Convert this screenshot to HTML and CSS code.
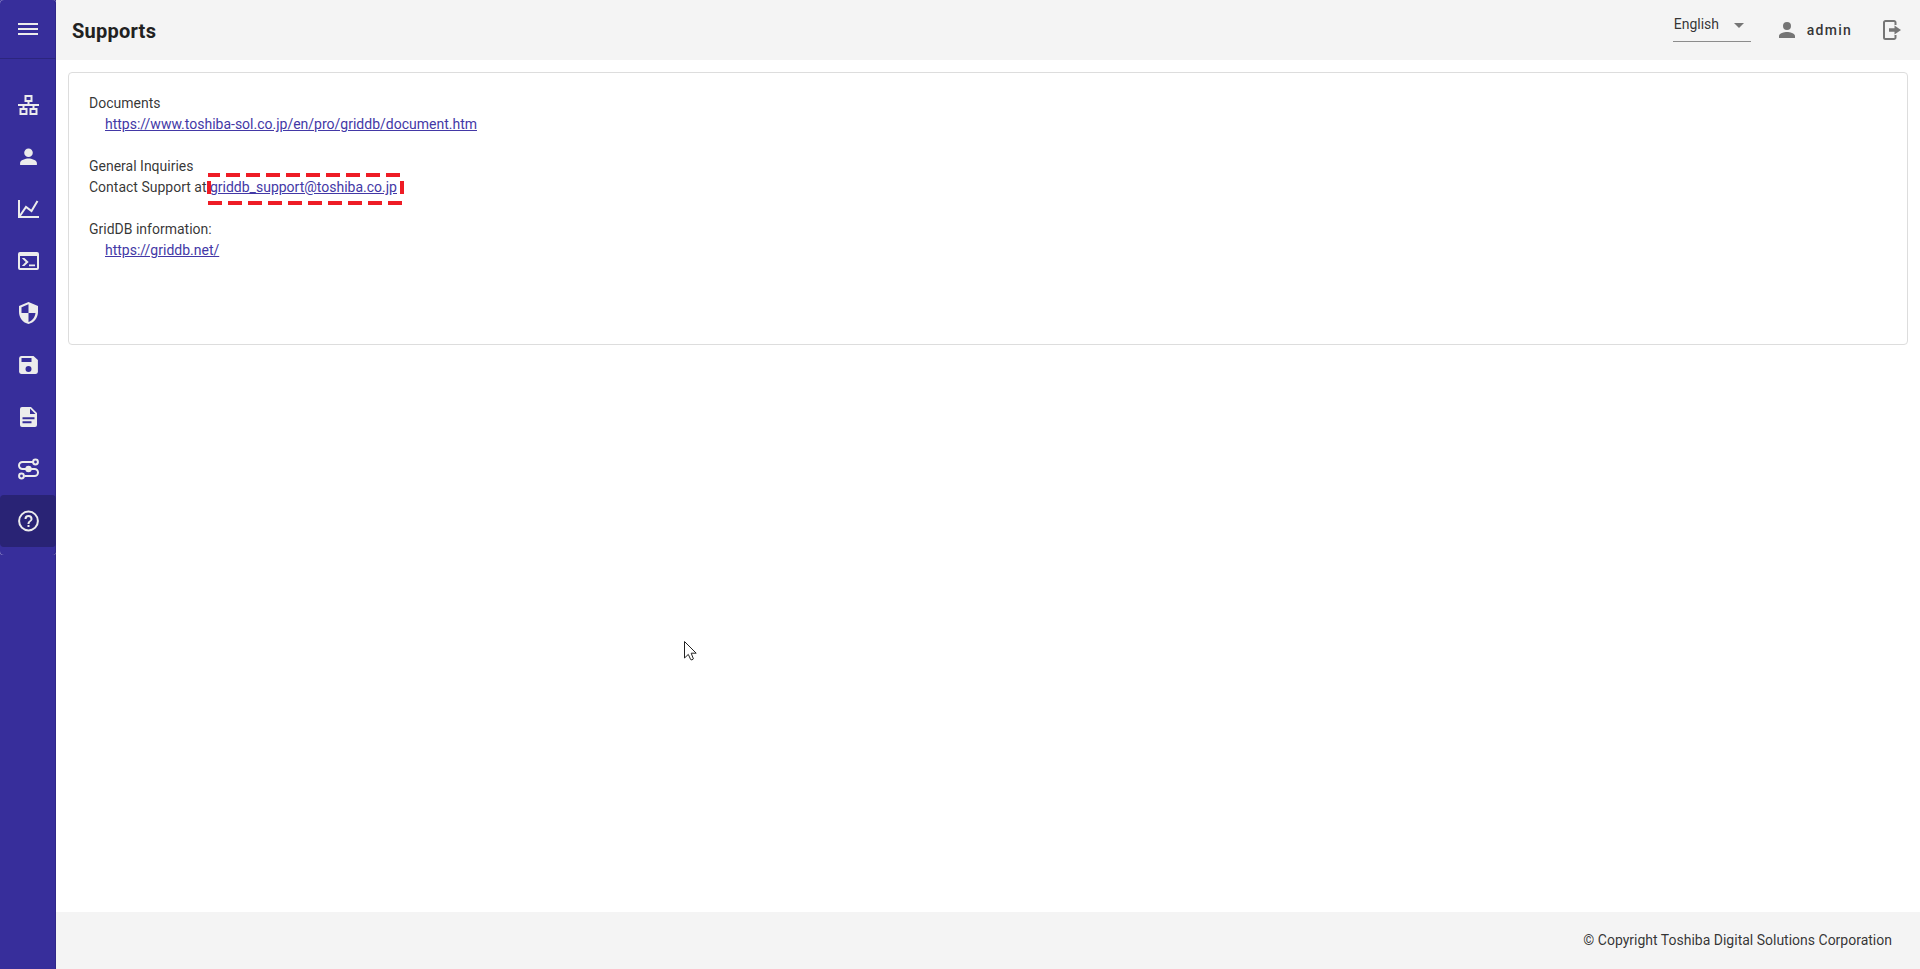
FILE: index.html
```html
<!DOCTYPE html>
<html lang="en">
<head>
    <meta charset="UTF-8">
    <meta name="viewport" content="width=device-width, initial-scale=1.0">
    <title>Supports</title>
    <link rel="stylesheet" href="styles.css">
</head>
<body>
    <aside class="sidebar">
        <div class="menu">
            <div class="menu-body">
                <button class="menu-toggle" type="button" aria-label="Menu">
                    <svg class="icon" viewBox="0 0 24 24"><path d="M2 6h20v2H2zM2 11h20v2H2zM2 16h20v2H2z"/></svg>
                </button>
                <nav class="menu-list">
                    <a href="#cluster" class="menu-item" aria-label="Cluster">
                        <svg class="icon" viewBox="0 0 24 24"><path fill="none" stroke="currentColor" stroke-width="2" d="M9.500 3h6v5h-6zM4.500 16h6v5h-6zM14.500 16h6v5h-6zM12.500 8v4M2 12h21M7.500 12v4M17.500 12v4"/></svg>
                    </a>
                    <a href="#users" class="menu-item" aria-label="Users">
                        <svg class="icon" viewBox="0 0 24 24"><path d="M12.500 12a4.300 4.300 0 1 0 0-8.600 4.300 4.300 0 0 0 0 8.600zM12.500 13.500c-3 0-8.400 1.500-8.400 4.500v2h16.800v-2c0-3-5.400-4.500-8.400-4.500z"/></svg>
                    </a>
                    <a href="#monitor" class="menu-item" aria-label="Monitor">
                        <svg class="icon" viewBox="0 0 24 24"><path fill="none" stroke="currentColor" stroke-width="2" d="M3 3v17H23M3.500 19.500L10 10l5.500 4L21.500 4"/></svg>
                    </a>
                    <a href="#shell" class="menu-item" aria-label="Operating tool">
                        <svg class="icon" viewBox="0 0 24 24"><path fill-rule="evenodd" d="M4 3h17a2 2 0 0 1 2 2v14a2 2 0 0 1-2 2H4a2 2 0 0 1-2-2V5a2 2 0 0 1 2-2zm0 4v12h17V7z"/><path d="M5.800 9h2.600l4.300 4-4.300 4H5.800l3.900-4zM13 15.500h6v1.700h-6z"/></svg>
                    </a>
                    <a href="#security" class="menu-item" aria-label="Security">
                        <svg class="icon" viewBox="0 0 24 24"><path d="M12.500 1L3 5v6c0 5.600 4 10.800 9.500 12 5.500-1.200 9.500-6.400 9.500-12V5zm0 11h7c-.5 4.200-3.300 7.900-7 9V12h-7V6.300l7-3.100z"/></svg>
                    </a>
                    <a href="#backup" class="menu-item" aria-label="Backup">
                        <svg class="icon" viewBox="0 0 24 24"><path d="M17.500 3h-12a2.400 2.400 0 0 0-2.400 2v14a2.400 2.400 0 0 0 2.400 2h14a2.400 2.400 0 0 0 2.400-2V7zm-5 16a3 3 0 1 1 0-6 3 3 0 0 1 0 6zm3-10h-10V5h10z"/></svg>
                    </a>
                    <a href="#logs" class="menu-item" aria-label="Logs">
                        <svg class="icon" viewBox="0 0 24 24"><path d="M15 2H6a2 2 0 0 0-2 2v16a2 2 0 0 0 2 2h13a2 2 0 0 0 2-2V8zM15.500 18.200h-9v-2h9zm3-4h-12v-2h12zM14 9V3.500L19.500 9z"/></svg>
                    </a>
                    <a href="#flow" class="menu-item" aria-label="Data flow">
                        <svg class="icon" viewBox="0 0 24 24"><g fill="none" stroke="currentColor" stroke-width="2"><path d="M17 5H6.500a3.500 3.500 0 0 0 0 7h12a3.500 3.500 0 0 1 0 7h-10"/><circle cx="19.500" cy="5" r="2.400"/><circle cx="5.500" cy="19" r="2.400"/></g><circle cx="12.500" cy="12" r="3.200"/></svg>
                    </a>
                    <a href="#supports" class="menu-item active" aria-label="Supports">
                        <svg class="icon" viewBox="0 0 24 24"><circle cx="12.500" cy="12" r="9.400" fill="none" stroke="currentColor" stroke-width="2"/><path d="M11.500 16h2v2h-2zM12.500 6a4 4 0 0 0-4 4h2a2 2 0 1 1 4 0c0 2-3 1.800-3 5h2c0-2.300 3-2.500 3-5a4 4 0 0 0-4-4z"/></svg>
                    </a>
                </nav>
            </div>
        </div>
    </aside>

    <div class="page">
        <header class="header">
            <h1>Supports</h1>
            <div class="header-tools">
                <div class="language">
                    <select class="language-select" aria-label="Language">
                        <option>English</option>
                        <option>Japanese</option>
                    </select>
                    <svg class="language-arrow" viewBox="0 0 10 5"><path d="M0 0h10L5 5z"/></svg>
                </div>
                <button class="user" type="button">
                    <svg class="icon user-icon" viewBox="0 0 24 24"><path d="M12 12a4 4 0 1 0 0-8 4 4 0 0 0 0 8zM12 14c-2.700 0-8 1.300-8 4v2h16v-2c0-2.700-5.300-4-8-4z"/></svg>
                    admin
                </button>
                <button class="logout" type="button" aria-label="Log out">
                    <svg class="icon" viewBox="0 0 24 24"><path fill="none" stroke="currentColor" stroke-width="2" d="M15.500 7V4.500A1.500 1.500 0 0 0 14 3H5.500A1.500 1.500 0 0 0 4 4.500v15A1.500 1.500 0 0 0 5.500 21H14a1.500 1.500 0 0 0 1.500-1.500V17"/><path d="M9 10.200h5.500V7.500L21 12l-6.500 4.500v-2.700H9z"/></svg>
                </button>
            </div>
        </header>

        <main class="content">
            <section class="card">
                <div class="block">
                    <p>Documents</p>
                    <p class="indent"><a href="https://www.toshiba-sol.co.jp/en/pro/griddb/document.htm">https://www.toshiba-sol.co.jp/en/pro/griddb/document.htm</a></p>
                </div>
                <div class="block">
                    <p>General Inquiries</p>
                    <p>Contact Support at <span class="marked"><a href="mailto:griddb_support@toshiba.co.jp">griddb_support@toshiba.co.jp</a><svg class="marker" viewBox="0 0 198 32"><path d="M1 2h194" stroke-dasharray="14 6" stroke-dashoffset="2"/><path d="M1 30h196" stroke-dasharray="14 6"/><path d="M2 8v13M195 8v13"/></svg></span></p>
                </div>
                <div class="block">
                    <p>GridDB information:</p>
                    <p class="indent"><a href="https://griddb.net/">https://griddb.net/</a></p>
                </div>
            </section>
        </main>

        <footer class="footer">© Copyright Toshiba Digital Solutions Corporation</footer>
    </div>

    <!-- Pointer -->
    <svg class="pointer" viewBox="0 0 14 20"><path d="M.5.500v16.500l3.800-3.600 2.400 5.200q1.200 1 2.700-.7L7.200 12.200h5z"/></svg>
</body>
</html>
```

FILE: styles.css
```css
* {
    margin: 0;
    padding: 0;
    box-sizing: border-box;
}

body {
    display: flex;
    min-height: 100vh;
    background-color: #fff;
    color: rgba(0, 0, 0, 0.8);
    font-family: Roboto, sans-serif;
    font-size: 14px;
    line-height: 21px;
}

button {
    border: none;
    background: none;
    font: inherit;
    color: inherit;
    cursor: pointer;
}

.icon {
    display: block;
    width: 24px;
    height: 24px;
    fill: currentColor;
}

/* Sidebar */
.sidebar {
    flex: none;
    width: 56px;
    color: #ececec;
}

.sidebar,
.menu-body {
    background-color: #372e9b;
    box-shadow: inset -1px 0 #2f2788;
}

.menu {
    border-radius: 3px;
    background-color: #c3c0e1;
}

.menu-body {
    border-radius: 4px;
}

.menu-toggle {
    display: flex;
    align-items: center;
    width: 100%;
    height: 59px;
    padding-left: 16px;
    border-bottom: 1px solid #2c257e;
}

.menu-list {
    padding: 20px 0 8px;
}

.menu-item {
    display: flex;
    align-items: center;
    height: 52px;
    padding-left: 16px;
    border-radius: 4px;
    color: inherit;
}

.menu-item.active {
    background-color: #292375;
}

/* Page */
.page {
    flex: 1;
    display: flex;
    flex-direction: column;
}

.header {
    display: flex;
    align-items: center;
    justify-content: space-between;
    height: 60px;
    padding: 0 16px;
    background-color: #f4f4f4;
}

.header h1 {
    padding-top: 1px;
    color: #212121;
    font-size: 20px;
    font-weight: 700;
    line-height: 32px;
    letter-spacing: 0.25px;
}

.header-tools {
    display: flex;
    align-items: center;
}

.language {
    position: relative;
    width: 78px;
    margin: 0 24px 6px 0;
    padding-bottom: 5px;
    border-bottom: 1px solid #8c8c8c;
}

.language-select {
    appearance: none;
    display: block;
    width: 100%;
    height: 24px;
    padding-left: 1px;
    border: none;
    background: none;
    font: inherit;
    color: inherit;
}

.language-arrow {
    position: absolute;
    top: 11px;
    right: 7px;
    width: 10px;
    height: 5px;
    fill: #757575;
    pointer-events: none;
}

.user {
    display: flex;
    align-items: center;
    gap: 8px;
    margin-right: 28px;
    font-weight: 500;
    letter-spacing: 1.25px;
}

.user-icon,
.logout {
    color: #757575;
}

.content {
    flex: 1;
    padding: 12px;
}

.card {
    min-height: 273px;
    padding: 20px;
    border: 1px solid #ddd;
    border-radius: 4px;
}

.block {
    margin-bottom: 21px;
}

.indent {
    padding-left: 16px;
}

.card a {
    color: #4338a6;
}

.marked {
    position: relative;
}

.marker {
    position: absolute;
    top: -6px;
    left: -3px;
    width: 198px;
    height: 32px;
    fill: none;
    stroke: #ee1c25;
    stroke-width: 4px;
    pointer-events: none;
}

.footer {
    padding: 18px 28px;
    background-color: #f4f4f4;
    text-align: right;
}

.pointer {
    position: absolute;
    top: 641px;
    left: 684px;
    width: 14px;
    height: 20px;
    fill: #fff;
    stroke: #222;
    pointer-events: none;
}
```
